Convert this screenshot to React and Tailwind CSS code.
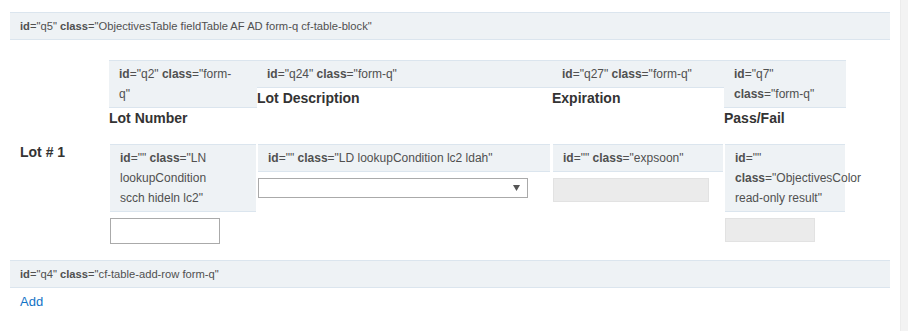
import React from 'react'

function Attr({ id, cls }) {
  return (
    <>
      <span className="font-bold">id</span>="{id}" <span className="font-bold">class</span>="{cls}"
    </>
  )
}

function Banner({ id, cls }) {
  return (
    <div className="flex h-[28px] items-center border-y border-[#dbe5ee] bg-[#eef2f5] px-[10px] text-[11.2px] text-[#505050]">
      <span>
        <Attr id={id} cls={cls} />
      </span>
    </div>
  )
}

function LabelBox({ id, cls, className = '' }) {
  return (
    <div className={`border-y border-[#dbe5ee] bg-[#eef2f5] py-[3px] pl-[10px] text-[12px] leading-[20px] text-[#505050] ${className}`}>
      <Attr id={id} cls={cls} />
    </div>
  )
}

function HeaderCell({ id, title, boxClass }) {
  return (
    <div className="flex flex-col">
      <LabelBox id={id} cls="form-q" className={boxClass} />
      <div className="text-[14px] font-bold leading-[20px] text-[#333]">{title}</div>
    </div>
  )
}

export default function App() {
  return (
    <div className="flex min-h-[331px] w-[908px] bg-white font-['Liberation_Sans',Arial,sans-serif]">
      <div className="flex-1 px-[10px] pt-[12px]">
        <Banner id="q5" cls="ObjectivesTable fieldTable AF AD form-q cf-table-block" />

        <div className="mt-[20px] grid grid-cols-[99px_148px_295px_172px_122px] gap-y-[16px]">
          <div />
          <HeaderCell id="q2" title="Lot Number" boxClass="pr-[25px]" />
          <HeaderCell id="q24" title="Lot Description" boxClass="pr-[10px]" />
          <HeaderCell id="q27" title="Expiration" boxClass="pr-[10px]" />
          <HeaderCell id="q7" title="Pass/Fail" boxClass="pr-[10px]" />

          <div className="pl-[10px] text-[14px] font-bold leading-[16px] text-[#333]">Lot # 1</div>

          <div className="ml-[1px] w-[146px]">
            <LabelBox id="" cls="LN lookupCondition scch hideln lc2" className="pr-[24px]" />
            <div className="mt-[6px] h-[26px] w-[110px] border border-[#aaa] bg-white" />
          </div>

          <div className="ml-[1px] w-[292px]">
            <LabelBox id="" cls="LD lookupCondition lc2 ldah" className="pr-[10px]" />
            <div className="mt-[6px] flex h-[20px] w-[270px] items-center justify-end border border-[#aaa] bg-white pr-[7px]">
              <svg width="7" height="6" viewBox="0 0 7 6">
                <path d="M0 0 H7 L3.5 6 Z" fill="#555" />
              </svg>
            </div>
          </div>

          <div className="ml-[1px] w-[170px]">
            <LabelBox id="" cls="expsoon" className="pr-[10px]" />
            <div className="mt-[6px] h-[24px] w-[156px] border border-[#e2e2e2] bg-[#ebebeb]" />
          </div>

          <div className="ml-[1px] w-[120px]">
            <LabelBox id="" cls="ObjectivesColor read-only result" className="pr-[10px]" />
            <div className="mt-[6px] h-[24px] w-[90px] border border-[#e2e2e2] bg-[#ebebeb]" />
          </div>
        </div>

        <div className="mt-[16px]">
          <Banner id="q4" cls="cf-table-add-row form-q" />
        </div>
        <div className="pl-[10px] pt-[2px] text-[13px] leading-[24px] text-[#1273c6]">Add</div>
      </div>
      <div className="w-[8px] border-l border-[#ececec] bg-[#f3f3f3]" />
    </div>
  )
}
